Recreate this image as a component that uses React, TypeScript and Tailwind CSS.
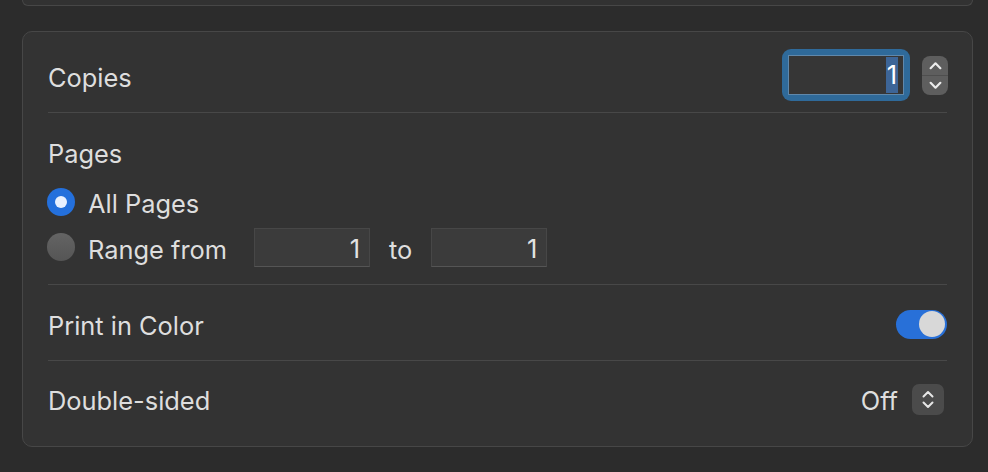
import { useState } from "react";

function Chevron({ dir, className }: { dir: "up" | "down"; className?: string }) {
  return (
    <svg viewBox="0 0 12 8" className={className} fill="none">
      <path
        d={dir === "up" ? "M1.5 6.5L6 2L10.5 6.5" : "M1.5 1.5L6 6L10.5 1.5"}
        stroke="currentColor"
        strokeWidth="2"
        strokeLinecap="round"
        strokeLinejoin="round"
      />
    </svg>
  );
}

function Radio({ checked }: { checked: boolean }) {
  return checked ? (
    <div className="w-[28px] h-[28px] rounded-full bg-[#2470dc] flex items-center justify-center shrink-0">
      <div className="w-[12px] h-[12px] rounded-full bg-[#e9f1ff]" />
    </div>
  ) : (
    <div className="w-[28px] h-[28px] rounded-full bg-gradient-to-b from-[#646464] to-[#555555] shrink-0" />
  );
}

function NumField({ value }: { value: string }) {
  return (
    <div className="w-[116px] h-[39px] bg-[#3b3b3b] border border-[#474747] border-b-[#555555] flex items-center justify-end pr-[9px] text-[#e2e2e2]">
      <span className="mt-[4px]">{value}</span>
    </div>
  );
}

export default function App() {
  const [color, setColor] = useState(true);
  const [range, setRange] = useState(false);

  return (
    <div
      className="w-[988px] h-[472px] bg-[#2c2c2c] pl-[22px] pr-[15px] overflow-hidden text-[25.4px] leading-[32px] text-[#dedede]"
      style={{ fontFamily: "Inter, 'Noto Sans', sans-serif" }}
    >
      {/* tail of the card above */}
      <div className="h-[6px] rounded-b-[10px] border-x border-b border-[#474747] bg-[#323232]" />

      <div className="mt-[25px] h-[416px] rounded-[10px] border border-[#474747] bg-[#333333] px-[25px]">
        {/* Copies */}
        <div className="h-[81px] pt-[6px] flex items-center justify-between border-b border-[#484848]">
          <span className="mt-[5px]">Copies</span>
          <div className="flex items-center gap-[12px] mr-[-1px]">
            <div className="rounded-[9px] bg-[#2f6a9a] p-[6px]">
              <div className="w-[116px] h-[40px] bg-[#363636] border border-[#6088ab] flex items-center justify-end pr-[5px]">
                <span className="bg-[#3d6597] text-white px-[1px] leading-[36px]">1</span>
              </div>
            </div>
            <div className="w-[26px] h-[39px] rounded-[8px] bg-[#5e5e5e] flex flex-col text-[#ececec]">
              <div className="flex-1 flex items-center justify-center border-b border-[#4e4e4e]">
                <Chevron dir="up" className="w-[13px] h-[9px]" />
              </div>
              <div className="flex-1 flex items-center justify-center">
                <Chevron dir="down" className="w-[13px] h-[9px]" />
              </div>
            </div>
          </div>
        </div>

        {/* Pages */}
        <div className="h-[172px] pt-[23px] border-b border-[#484848]">
          <div className="mt-[2px]">Pages</div>
          <div
            className="mt-[16px] h-[32px] flex items-center gap-[13px] -ml-[1px]"
            onClick={() => setRange(false)}
          >
            <Radio checked={!range} />
            <span className="mt-[3px]">All Pages</span>
          </div>
          <div className="mt-[9px] h-[40px] flex items-center -ml-[1px]">
            <div className="flex items-center gap-[13px]" onClick={() => setRange(true)}>
              <Radio checked={range} />
              <span className="mt-[5px]">Range from</span>
            </div>
            <div className="ml-[27px]">
              <NumField value="1" />
            </div>
            <span className="mx-[19px] mt-[5px]">to</span>
            <NumField value="1" />
          </div>
        </div>

        {/* Print in Color */}
        <div className="h-[76px] pt-[3px] flex items-center justify-between border-b border-[#484848]">
          <span className="mt-[4px]">Print in Color</span>
          <button
            onClick={() => setColor(!color)}
            className={
              color
                ? "w-[51px] h-[29px] rounded-full bg-[#2870d8] flex items-center justify-end pr-[2px]"
                : "w-[51px] h-[29px] rounded-full bg-[#555555] flex items-center justify-start pl-[2px]"
            }
          >
            <div className="w-[26px] h-[26px] rounded-full bg-[#d8d8d8]" />
          </button>
        </div>

        {/* Double-sided */}
        <div className="h-[84px] pb-[8px] flex items-center justify-between">
          <span className="mt-[4px]">Double-sided</span>
          <div className="flex items-center gap-[14px] mr-[3px]">
            <span className="mt-[4px]">Off</span>
            <div className="w-[32px] h-[31px] rounded-[7px] bg-[#4b4b4b] flex flex-col items-center justify-center gap-[3px] text-[#e6e6e6]">
              <Chevron dir="up" className="w-[12px] h-[8px]" />
              <Chevron dir="down" className="w-[12px] h-[8px]" />
            </div>
          </div>
        </div>
      </div>
    </div>
  );
}
